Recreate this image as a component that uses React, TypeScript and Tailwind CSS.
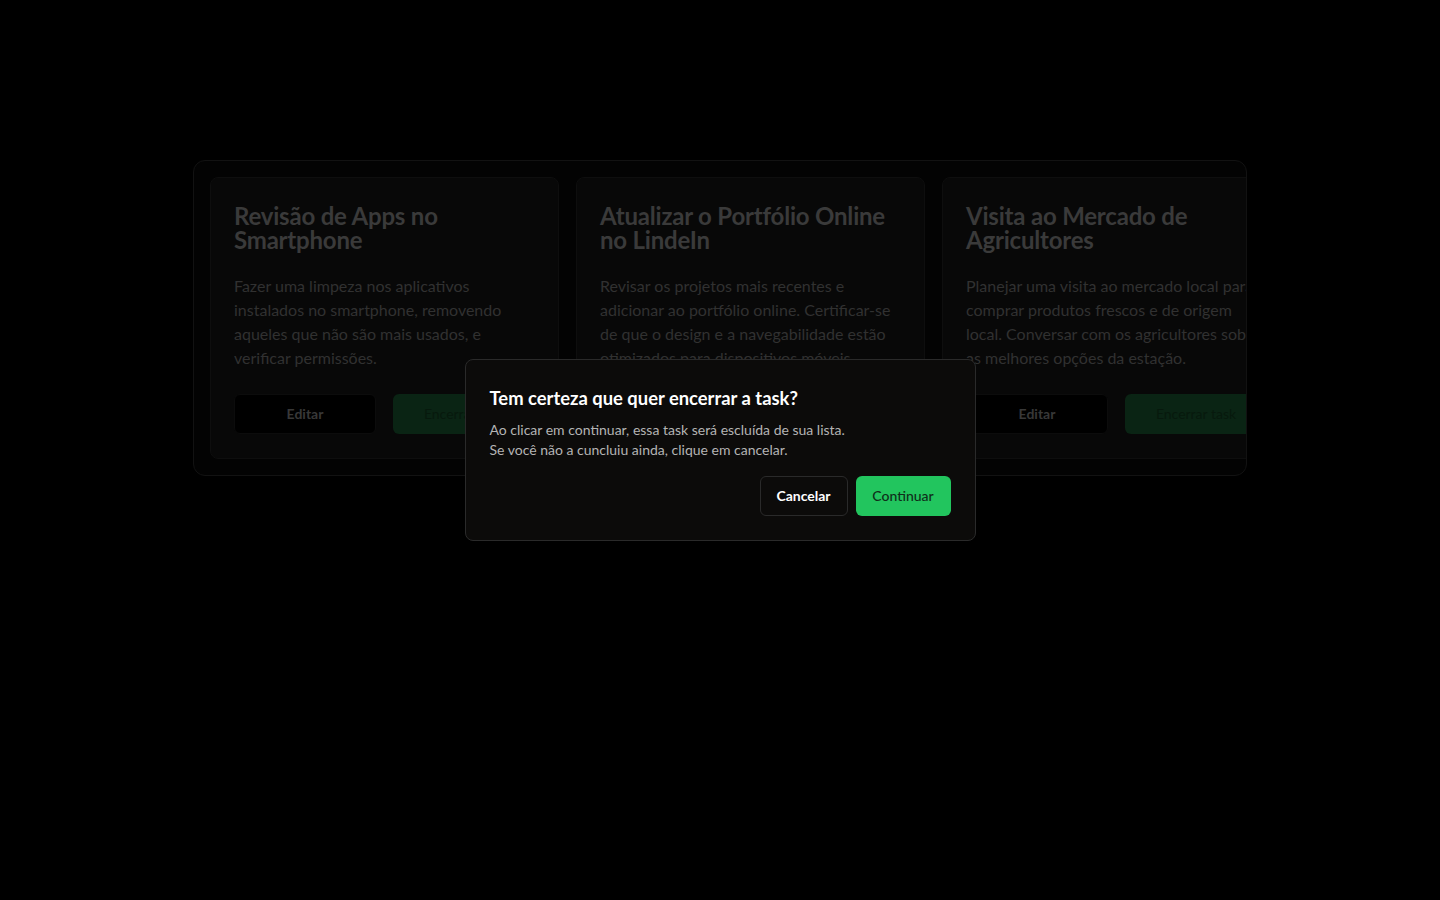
import React from "react";

type Task = { title: string; description: string };

const tasks: Task[] = [
  {
    title: "Revisão de Apps no Smartphone",
    description:
      "Fazer uma limpeza nos aplicativos instalados no smartphone, removendo aqueles que não são mais usados, e verificar permissões.",
  },
  {
    title: "Atualizar o Portfólio Online no LindeIn",
    description:
      "Revisar os projetos mais recentes e adicionar ao portfólio online. Certificar-se de que o design e a navegabilidade estão otimizados para dispositivos móveis.",
  },
  {
    title: "Visita ao Mercado de Agricultores",
    description:
      "Planejar uma visita ao mercado local para comprar produtos frescos e de origem local. Conversar com os agricultores sobre as melhores opções da estação.",
  },
];

function TaskCard({ task }: { task: Task }) {
  return (
    <div className="flex w-[349px] shrink-0 flex-col rounded-lg border border-[#0e0e0e] bg-[#080808] px-[23px] py-6">
      <h2 className="pt-[2px] text-[24px] leading-6 font-bold tracking-[-0.2px] text-[#3a3a3a]">
        {task.title}
      </h2>
      <p className="mt-[22px] h-24 overflow-hidden text-base leading-6 text-[#313131]">
        {task.description}
      </p>
      <div className="mt-6 grid grid-cols-2 gap-[17px]">
        <button className="h-10 rounded-md border border-[#0c0c0c] bg-black text-sm font-bold text-[#383838]">
          Editar
        </button>
        <button className="h-10 whitespace-nowrap rounded-md bg-[#0a2414] text-sm text-[#07190d]">
          Encerrar task
        </button>
      </div>
    </div>
  );
}

export default function App() {
  return (
    <div
      className="min-h-screen bg-black pt-40"
      style={{ fontFamily: "Lato, 'Noto Sans', sans-serif" }}
    >
      <div className="mx-auto w-[1054px] overflow-hidden rounded-xl border border-[#121212] bg-[#030303] p-4">
        <div className="flex gap-[17px]">
          {tasks.map((t) => (
            <TaskCard key={t.title} task={t} />
          ))}
        </div>
      </div>

      <div className="fixed inset-0 flex items-center justify-center">
        <div className="w-[511px] rounded-lg border border-[#2a2a2a] bg-[#0c0b0a] p-6">
          <div className="flex flex-col gap-2">
            <h3 className="text-[18.4px] leading-7 font-bold text-white">
              Tem certeza que quer encerrar a task?
            </h3>
            <p className="text-sm leading-5 text-[#b4b4b4]">
              Ao clicar em continuar, essa task será escluída de sua lista.
              <br />
              Se você não a cuncluiu ainda, clique em cancelar.
            </p>
          </div>
          <div className="mt-4 flex justify-end gap-2">
            <button className="h-10 w-[88px] rounded-md border border-[#2a2a2a] bg-[#0c0b0a] text-sm font-bold text-white">
              Cancelar
            </button>
            <button className="h-10 w-[95px] rounded-md bg-[#22c55e] text-sm font-medium text-[#0f2e1a]">
              Continuar
            </button>
          </div>
        </div>
      </div>
    </div>
  );
}
